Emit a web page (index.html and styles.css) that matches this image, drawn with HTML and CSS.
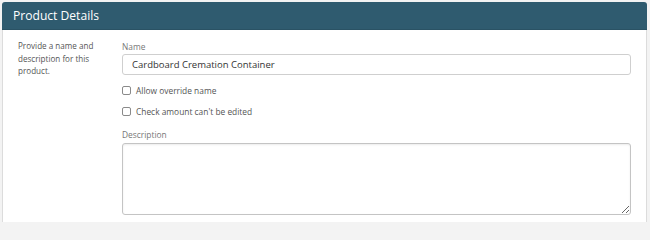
FILE: index.html
```html
<!DOCTYPE html>
<html>
<head>
<meta charset="utf-8">
<link rel="stylesheet" href="styles.css">
</head>
<body>
<div class="panel">
  <div class="panel-header">Product Details</div>
  <div class="panel-body">
    <div class="help">Provide a name and description for this product.</div>
    <div class="fields">
      <label class="field-label">Name</label>
      <input class="text-input" type="text" value="Cardboard Cremation Container">
      <label class="check first"><input type="checkbox"><span>Allow override name</span></label>
      <label class="check"><input type="checkbox"><span>Check amount can't be edited</span></label>
      <label class="field-label desc-label">Description</label>
      <textarea class="textarea"></textarea>
    </div>
  </div>
</div>
</body>
</html>
```
FILE: styles.css
```css
html, body {
  margin: 0;
  padding: 0;
  background: #f3f3f3;
  font-family: "Open Sans", "DejaVu Sans", sans-serif;
  height: 222px;
  overflow: hidden;
}
.panel {
  margin: 2px 3px 0 2px;
  background: #fff;
  border: 1px solid #dcdcdc;
  border-top: none;
  border-radius: 4px 4px 0 0;
  height: 240px;
}
.panel-header {
  background: #2f5b6f;
  color: #fff;
  height: 27px;
  line-height: 27px;
  padding-left: 11px;
  font-size: 12.1px;
  border-radius: 3px 3px 0 0;
  margin: 0 -1px;
  border-bottom: 1px solid #2a5264;
}
.panel-body {
  display: grid;
  grid-template-columns: 104px 1fr;
  padding: 10px 15px 0 15px;
}
.help {
  font-size: 8.1px;
  line-height: 12.7px;
  color: #555;
  padding-right: 8px;
}
.fields {
  display: flex;
  flex-direction: column;
}
.field-label {
  font-size: 8.4px;
  line-height: 13px;
  color: #777;
}
.text-input {
  margin-top: 1px;
  height: 21px;
  box-sizing: border-box;
  border: 1px solid #cfcfcf;
  border-radius: 3px;
  padding: 0 9px;
  font-family: inherit;
  font-size: 9.5px;
  color: #333;
  outline: none;
}
.check {
  display: flex;
  align-items: center;
  gap: 5px;
  font-size: 8.4px;
  line-height: 13px;
  color: #555;
  margin-top: 8px;
}
.check.first {
  margin-top: 9px;
}
.check input {
  appearance: none;
  -webkit-appearance: none;
  margin: 0;
  width: 9px;
  height: 9px;
  border: 1px solid #8a8a8a;
  border-radius: 2px;
  background: #fff;
  box-sizing: border-box;
}
.desc-label {
  margin-top: 10px;
}
.textarea {
  margin-top: 2px;
  height: 72px;
  box-sizing: border-box;
  border: 1px solid #c4c4c4;
  border-radius: 3px;
  box-shadow: inset 0 1px 2px rgba(0,0,0,0.08);
  font-family: inherit;
  outline: none;
}
```
